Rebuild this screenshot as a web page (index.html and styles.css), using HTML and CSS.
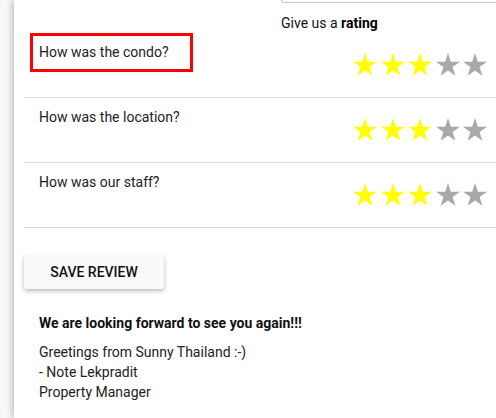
FILE: index.html
```html
<!DOCTYPE html>
<html lang="en">
<head>
<meta charset="utf-8">
<title>Review</title>
<link rel="stylesheet" href="styles.css">
</head>
<body>
<div class="card">
  <div class="field"></div>
  <div class="rating-head">Give us a <b>rating</b></div>

  <div class="row">
    <span class="label highlight">How was the condo?</span>
    <div class="stars">
      <svg class="star on" viewBox="0 0 24 23"><polygon points="12,0 14.83,8.72 24,8.72 16.58,14.11 19.42,22.83 12,17.44 4.58,22.83 7.42,14.11 0,8.72 9.17,8.72"/></svg>
      <svg class="star on" viewBox="0 0 24 23"><polygon points="12,0 14.83,8.72 24,8.72 16.58,14.11 19.42,22.83 12,17.44 4.58,22.83 7.42,14.11 0,8.72 9.17,8.72"/></svg>
      <svg class="star on" viewBox="0 0 24 23"><polygon points="12,0 14.83,8.72 24,8.72 16.58,14.11 19.42,22.83 12,17.44 4.58,22.83 7.42,14.11 0,8.72 9.17,8.72"/></svg>
      <svg class="star off" viewBox="0 0 24 23"><polygon points="12,0 14.83,8.72 24,8.72 16.58,14.11 19.42,22.83 12,17.44 4.58,22.83 7.42,14.11 0,8.72 9.17,8.72"/></svg>
      <svg class="star off" viewBox="0 0 24 23"><polygon points="12,0 14.83,8.72 24,8.72 16.58,14.11 19.42,22.83 12,17.44 4.58,22.83 7.42,14.11 0,8.72 9.17,8.72"/></svg>
    </div>
  </div>

  <div class="row">
    <span class="label">How was the location?</span>
    <div class="stars">
      <svg class="star on" viewBox="0 0 24 23"><polygon points="12,0 14.83,8.72 24,8.72 16.58,14.11 19.42,22.83 12,17.44 4.58,22.83 7.42,14.11 0,8.72 9.17,8.72"/></svg>
      <svg class="star on" viewBox="0 0 24 23"><polygon points="12,0 14.83,8.72 24,8.72 16.58,14.11 19.42,22.83 12,17.44 4.58,22.83 7.42,14.11 0,8.72 9.17,8.72"/></svg>
      <svg class="star on" viewBox="0 0 24 23"><polygon points="12,0 14.83,8.72 24,8.72 16.58,14.11 19.42,22.83 12,17.44 4.58,22.83 7.42,14.11 0,8.72 9.17,8.72"/></svg>
      <svg class="star off" viewBox="0 0 24 23"><polygon points="12,0 14.83,8.72 24,8.72 16.58,14.11 19.42,22.83 12,17.44 4.58,22.83 7.42,14.11 0,8.72 9.17,8.72"/></svg>
      <svg class="star off" viewBox="0 0 24 23"><polygon points="12,0 14.83,8.72 24,8.72 16.58,14.11 19.42,22.83 12,17.44 4.58,22.83 7.42,14.11 0,8.72 9.17,8.72"/></svg>
    </div>
  </div>

  <div class="row">
    <span class="label">How was our staff?</span>
    <div class="stars">
      <svg class="star on" viewBox="0 0 24 23"><polygon points="12,0 14.83,8.72 24,8.72 16.58,14.11 19.42,22.83 12,17.44 4.58,22.83 7.42,14.11 0,8.72 9.17,8.72"/></svg>
      <svg class="star on" viewBox="0 0 24 23"><polygon points="12,0 14.83,8.72 24,8.72 16.58,14.11 19.42,22.83 12,17.44 4.58,22.83 7.42,14.11 0,8.72 9.17,8.72"/></svg>
      <svg class="star on" viewBox="0 0 24 23"><polygon points="12,0 14.83,8.72 24,8.72 16.58,14.11 19.42,22.83 12,17.44 4.58,22.83 7.42,14.11 0,8.72 9.17,8.72"/></svg>
      <svg class="star off" viewBox="0 0 24 23"><polygon points="12,0 14.83,8.72 24,8.72 16.58,14.11 19.42,22.83 12,17.44 4.58,22.83 7.42,14.11 0,8.72 9.17,8.72"/></svg>
      <svg class="star off" viewBox="0 0 24 23"><polygon points="12,0 14.83,8.72 24,8.72 16.58,14.11 19.42,22.83 12,17.44 4.58,22.83 7.42,14.11 0,8.72 9.17,8.72"/></svg>
    </div>
  </div>

  <button class="save">SAVE REVIEW</button>

  <div class="note">
    <p class="note-title">We are looking forward to see you again!!!</p>
    <p class="note-body">Greetings from Sunny Thailand :-)<br>- Note Lekpradit<br>Property Manager</p>
  </div>
</div>
</body>
</html>
```

FILE: styles.css
```css
html, body {
  margin: 0;
  padding: 0;
}

body {
  background: #f7f7f7;
  font-family: Roboto, "Liberation Sans", Arial, sans-serif;
  font-size: 14px;
  line-height: 20px;
  color: #222;
  overflow: hidden;
}

.card {
  margin-left: 14px;
  min-height: 418px;
  background: #fff;
  box-shadow: -2px 0 6px rgba(0, 0, 0, 0.22);
  padding-left: 10px;
  box-sizing: border-box;
}

.field {
  margin-left: 257px;
  height: 2px;
  border: 1px solid #c8c8c8;
  border-top: none;
  border-right: none;
  border-radius: 0 0 0 4px;
}

.rating-head {
  margin-left: 257px;
  padding-top: 10px;
  color: #111;
}

.rating-head b {
  font-weight: 700;
  color: #000;
}

.row {
  display: flex;
  justify-content: space-between;
  align-items: flex-start;
  height: 55px;
  padding: 9px 9px 0 15px;
  border-bottom: 1px solid #dedede;
}

.label {
  position: relative;
  color: #222;
}

.highlight::after {
  content: "";
  position: absolute;
  left: -9px;
  right: -24px;
  top: -9px;
  bottom: -10px;
  border: 3px solid #ff0000;
}

.stars {
  display: flex;
  gap: 3.5px;
  margin-top: 11px;
}

.star {
  width: 24px;
  height: 23px;
  display: block;
}

.star.on {
  fill: #ffff00;
}

.star.off {
  fill: #a9a9a9;
}

.save {
  display: block;
  margin-top: 27px;
  width: 140px;
  height: 34px;
  padding: 0;
  border: none;
  border-radius: 2px;
  background: #fafafa;
  box-shadow: 0 2px 4px rgba(0, 0, 0, 0.28);
  font-family: Roboto, "Liberation Sans", Arial, sans-serif;
  font-size: 14px;
  font-weight: 500;
  color: #111;
  letter-spacing: 0;
}

.note {
  padding-left: 15px;
  padding-top: 24px;
}

.note p {
  margin: 0;
}

.note-title {
  font-weight: 700;
  color: #111;
  margin-bottom: 9px !important;
}

.note-body {
  color: #222;
}
```
